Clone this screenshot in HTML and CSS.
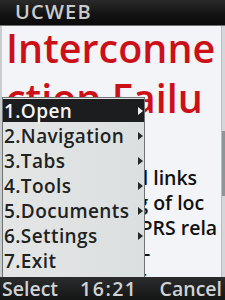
FILE: index.html
```html
<!DOCTYPE html>
<html>
<head>
<meta charset="utf-8">
<link rel="stylesheet" href="styles.css">
</head>
<body>
<div class="screen">
  <header class="topbar">UCWEB</header>
  <main class="main">
    <div class="page">
      <div class="title first">Interconne</div>
      <div class="title">ction Failu</div>
      <div class="line lead">Be sure that all links</div>
      <div class="line">and the setting of loc</div>
      <div class="line">al networks, GPRS rela</div>
      <div class="line">ted items, etc. -</div>
      <div class="line">Please connect</div>
    </div>
    <div class="scroll"><div class="thumb"></div></div>
    <ul class="menu">
      <li class="item active"><span>1.Open</span><i class="arrow"></i></li>
      <li class="item"><span>2.Navigation</span><i class="arrow"></i></li>
      <li class="item"><span>3.Tabs</span><i class="arrow"></i></li>
      <li class="item"><span>4.Tools</span><i class="arrow"></i></li>
      <li class="item"><span>5.Documents</span><i class="arrow"></i></li>
      <li class="item"><span>6.Settings</span><i class="arrow"></i></li>
      <li class="item"><span>7.Exit</span></li>
    </ul>
  </main>
  <footer class="softkeys">
    <span>Select</span>
    <span class="clock">16:21</span>
    <span>Cancel</span>
  </footer>
</div>
</body>
</html>
```
FILE: styles.css
```css
* { box-sizing: border-box; }
html, body { margin: 0; padding: 0; background: #000; }
body { font-family: "Open Sans", "DejaVu Sans", sans-serif; }
.screen {
  width: 225px;
  height: 300px;
  display: flex;
  flex-direction: column;
  overflow: hidden;
}
.topbar {
  height: 26px;
  flex: none;
  background: linear-gradient(#2a2a2a, #121212 60%, #0c0c0c);
  border-bottom: 1px solid #6d6f70;
  color: #c9cbcc;
  font-weight: 600;
  font-size: 20px;
  letter-spacing: 1.2px;
  line-height: 24px;
  padding-left: 15px;
}
.main {
  flex: 1;
  position: relative;
  display: flex;
  background: #f3f4f7;
  overflow: hidden;
  border-left: 2px solid #c9cccd;
}
.page {
  flex: 1;
  min-width: 0;
  overflow: hidden;
  padding: 0 2px 0 4px;
}
.title {
  color: #cc1018;
  font-size: 39.5px;
  font-weight: 600;
  line-height: 50px;
  white-space: nowrap;
  overflow: hidden;
}
.title.first { margin-top: -3px; }
.line {
  font-size: 19.5px;
  font-weight: 600;
  color: #111;
  line-height: 25px;
  white-space: nowrap;
  overflow: hidden;
}
.line.lead { margin-top: 42px; }
.scroll {
  width: 4px;
  flex: none;
  background: #d4d7d9;
  border-left: 1px solid #b9bdbf;
  padding-top: 105px;
}
.thumb { height: 65px; background: #8f9597; }
.menu {
  position: absolute;
  left: 0;
  top: 71px;
  width: 143px;
  bottom: 0;
  margin: 0;
  padding: 1px 0 0;
  list-style: none;
  background: linear-gradient(90deg, #e4e6e6, #dcdfdf);
  border: 1px solid #6f7374;
  border-bottom: none;
}
.item {
  height: 25px;
  display: flex;
  align-items: center;
  justify-content: space-between;
  gap: 1px;
  padding: 0 1px 0 1px;
  font-size: 19px;
  letter-spacing: 0.4px;
  font-weight: 600;
  color: #202222;
  white-space: nowrap;
}
.item.active {
  background: #1c1d1e;
  color: #f4f4f4;
  height: 23px;
  margin-bottom: 1px;
}
.arrow {
  flex: none;
  width: 0;
  height: 0;
  border-top: 4px solid transparent;
  border-bottom: 4px solid transparent;
  border-left: 5px solid #252828;
}
.active .arrow { border-left-color: #f0f0f0; }
.softkeys {
  height: 23px;
  flex: none;
  background: linear-gradient(#2b2c2d, #141515);
  display: flex;
  justify-content: space-between;
  align-items: center;
  padding: 0 3px 0 2px;
  color: #cfd3d3;
  font-weight: 600;
  font-size: 19.5px;
  line-height: 23px;
}
.clock { letter-spacing: 1.5px; }
```
